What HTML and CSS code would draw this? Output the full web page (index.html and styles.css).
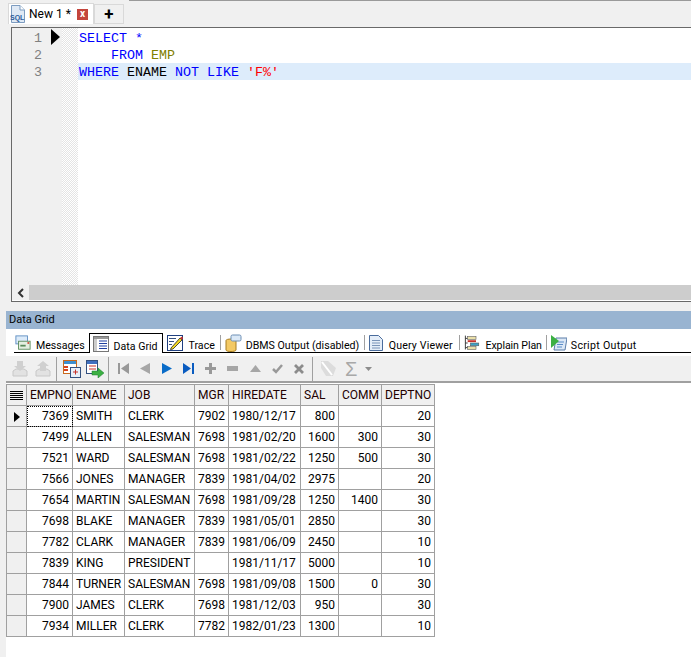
FILE: index.html
```html
<!DOCTYPE html>
<html lang="en">
<head>
<meta charset="utf-8">
<title>New 1</title>
<link rel="stylesheet" href="styles.css">
</head>
<body>
<div class="app">
  <div class="doc-tabs">
    <div class="doc-tab">
      <svg class="sql-icon" width="16" height="18" viewBox="0 0 16 18"><path d="M1.500 .5H10L14.500 5V17.500H1.500Z" fill="#dfe9f5" stroke="#7d9cc0"/><path d="M10 .5V5H14.500" fill="#fff" stroke="#7d9cc0"/><text x="0" y="15" class="sql-text">SQL</text></svg>
      <span class="doc-name">New 1 *</span>
      <span class="doc-close">x</span>
    </div>
    <div class="doc-add">+</div>
    <div class="doc-top-line"></div>
  </div>

  <div class="editor">
    <div class="editor-body">
      <div class="gutter">
        <div class="numbers"><div>1</div><div>2</div><div>3</div></div>
        <div class="marker-col"><svg width="9" height="16" viewBox="0 0 9 16"><path d="M0 0L9 8L0 16Z" fill="#000"/></svg></div>
        <div class="dots"></div>
      </div>
      <div class="code">
        <div class="line"><span class="kw">SELECT</span> <span class="star">*</span></div>
        <div class="line">    <span class="kw">FROM</span> <span class="tbl">EMP</span></div>
        <div class="line current"><span class="kw">WHERE</span> <span class="col">ENAME</span> <span class="kw">NOT</span> <span class="kw">LIKE</span> <span class="str">'F%'</span></div>
      </div>
    </div>
    <div class="hscroll">
      <div class="hscroll-btn"><svg width="8" height="10" viewBox="0 0 8 10"><path d="M6 1L2 5L6 9" fill="none" stroke="#333" stroke-width="2"/></svg></div>
      <div class="hscroll-track"></div>
    </div>
  </div>

  <div class="results">
    <div class="panel-title">Data Grid</div>
    <div class="tabs">
      <div class="tab">
        <svg width="16" height="16" viewBox="0 0 18 18"><rect x="1" y="1" width="13" height="9" fill="#dcebfa" stroke="#5b8cc0"/><rect x="4" y="7" width="13" height="9" fill="#e4efe0" stroke="#5a8a5a"/><rect x="6" y="11" width="6" height="2" fill="#5a8a5a"/><rect x="14" y="8" width="2" height="2" fill="#d04a3a"/></svg>
        <span>Messages</span>
      </div>
      <div class="tab active">
        <svg width="16" height="16" viewBox="0 0 16 16"><rect x=".5" y=".5" width="15" height="15" fill="#fff" stroke="#777"/><rect x="1" y="1" width="14" height="2" fill="#999"/><rect x="1" y="3" width="3" height="12" fill="#ccc"/><path d="M6 5h8M6 7.500h8M6 10h8M6 12.500h8" stroke="#1f3f9f" stroke-width="1.200"/></svg>
        <span>Data Grid</span>
      </div>
      <div class="tab trace">
        <svg width="16" height="16" viewBox="0 0 16 16"><rect x=".5" y=".5" width="15" height="15" fill="#fff" stroke="#1f3f7f"/><path d="M2 3.500h7M2 6.500h5M2 9.500h3" stroke="#34507f"/><path d="M4 13L13 3L15 5L6 14L3.500 14.500Z" fill="#f4d81e" stroke="#222" stroke-width=".8"/><path d="M13 3L15 5L16 3L15 1.500Z" fill="#c8322a"/></svg>
        <span>Trace</span>
      </div>
      <div class="tab-sep"></div>
      <div class="tab t-dbms">
        <svg width="17" height="18" viewBox="0 0 17 18"><path d="M1 6.500C1 4.500 11 4.500 11 6.500V16C11 18 1 18 1 16Z" fill="#f3c964" stroke="#a67c20"/><rect x="6" y="1" width="10" height="6" rx="1.500" fill="#dbe9f7" stroke="#6d8fb5"/></svg>
        <span>DBMS Output (disabled)</span>
      </div>
      <div class="tab-sep"></div>
      <div class="tab t-query">
        <svg width="14" height="16" viewBox="0 0 14 16"><path d="M.5 .5H9.500L13.500 4.500V15.500H.5Z" fill="#e4edf8" stroke="#4a6c9c"/><path d="M3 5.500h8M3 8h8M3 10.500h8M3 13h8" stroke="#7a94b8"/></svg>
        <span>Query Viewer</span>
      </div>
      <div class="tab-sep"></div>
      <div class="tab t-plan">
        <svg width="16" height="16" viewBox="0 0 17 16"><path d="M1.500 0V15M1.500 3H4M1.500 8H4M1.500 13H4" stroke="#333" fill="none"/><rect x="4" y="1" width="9" height="3" fill="#eadfa8" stroke="#555" stroke-width=".6"/><rect x="4" y="5" width="9" height="2" fill="#c8322a"/><rect x="7" y="8" width="9" height="3" fill="#3fa3c8" stroke="#555" stroke-width=".6"/><rect x="4" y="12" width="9" height="3" fill="#eadfa8" stroke="#555" stroke-width=".6"/></svg>
        <span>Explain Plan</span>
      </div>
      <div class="tab-sep"></div>
      <div class="tab t-script">
        <svg width="16" height="16" viewBox="0 0 16 16"><path d="M5 3H16L14 15H3Z" fill="#dce8f6" stroke="#5a7ca8"/><path d="M6 7h7M6 9.500h6M6 12h5" stroke="#5a8cc8"/><path d="M0 0L8 6L0 13Z" fill="#3cb043"/></svg>
        <span>Script Output</span>
      </div>
      <div class="tabs-rest"></div>
    </div>

    <div class="toolbar">
      <div class="tool-group first">
        <svg width="17" height="18" viewBox="0 0 17 18"><path d="M1 11V16H15V11L12 9H4Z" fill="#e2e2e2" stroke="#c8c8c8"/><path d="M5 1H11V6H14L8 11L2 6H5Z" fill="#d0d0d0"/></svg>
        <svg width="17" height="18" viewBox="0 0 17 18"><path d="M1 11V16H15V11L12 9H4Z" fill="#e2e2e2" stroke="#c8c8c8"/><path d="M5 11H11V6H14L8 1L2 6H5Z" fill="#d0d0d0"/></svg>
      </div>
      <div class="tool-group second">
        <svg width="18" height="18" viewBox="0 0 18 18"><rect x=".5" y=".5" width="13" height="13" fill="#fff" stroke="#c86a1e"/><rect x="1" y="1" width="12" height="3" fill="#3f8fd0"/><path d="M1 7h4M1 10h4" stroke="#d8421e" stroke-width="2"/><rect x="7.500" y="7.500" width="10" height="10" fill="#e8f0fa" stroke="#34507f"/><path d="M12.500 9.500v5M10 12h5" stroke="#c8322a"/></svg>
        <svg width="18" height="18" viewBox="0 0 18 18"><rect x=".5" y=".5" width="11" height="13" fill="#fff" stroke="#34507f"/><rect x="1" y="1" width="10" height="3" fill="#3f6fc0"/><path d="M3 6h7M3 9h7" stroke="#c8322a"/><path d="M6 11H12V8L18 13L12 18V15H6Z" fill="#3cb043" stroke="#1f7f2f" stroke-width=".5"/></svg>
      </div>
      <div class="tool-group nav">
        <svg width="11" height="11" viewBox="0 0 11 11"><path d="M0 0H2V11H0ZM11 0V11L3 5.500Z" fill="#999"/></svg>
        <svg width="10" height="11" viewBox="0 0 10 11"><path d="M10 0V11L0 5.500Z" fill="#a6a6a6"/></svg>
        <svg width="10" height="11" viewBox="0 0 10 11"><path d="M0 0V11L10 5.500Z" fill="#0a6cc8"/></svg>
        <svg width="11" height="11" viewBox="0 0 11 11"><path d="M9 0H11V11H9ZM0 0V11L8 5.500Z" fill="#0a5cc0"/></svg>
        <svg width="11" height="11" viewBox="0 0 11 11"><path d="M4 0H7V4H11V7H7V11H4V7H0V4H4Z" fill="#999"/></svg>
        <svg width="11" height="5" viewBox="0 0 11 5"><path d="M0 0H11V5H0Z" fill="#a6a6a6"/></svg>
        <svg width="11" height="7" viewBox="0 0 11 7"><path d="M5.500 0L11 7H0Z" fill="#a6a6a6"/></svg>
        <svg width="11" height="10" viewBox="0 0 11 10"><path d="M1 5L4 8L10 1" fill="none" stroke="#999" stroke-width="2.500"/></svg>
        <svg width="10" height="10" viewBox="0 0 10 10"><path d="M1 1L9 9M9 1L1 9" stroke="#8c8c8c" stroke-width="2.800"/></svg>
      </div>
      <div class="tool-group last">
        <svg width="17" height="17" viewBox="0 0 17 17"><path d="M1 1H8L16 8L13 16H6L1 8Z" fill="#dcdcdc"/><path d="M2 2L12 15" stroke="#fff" stroke-width="2"/></svg>
        <span class="sigma">Σ</span>
        <svg width="7" height="4" viewBox="0 0 7 4"><path d="M0 0H7L3.500 4Z" fill="#8c8c8c"/></svg>
      </div>
    </div>

    <div class="grid-wrap">
      <table class="grid">
        <colgroup><col class="c-ind"><col class="c-empno"><col class="c-ename"><col class="c-job"><col class="c-mgr"><col class="c-date"><col class="c-sal"><col class="c-comm"><col class="c-dept"></colgroup>
        <thead>
          <tr><th class="ind"><svg width="13" height="9" viewBox="0 0 13 9"><path d="M0 .5h13M0 2.500h13M0 4.500h13M0 6.500h13M0 8.500h13" stroke="#000"/></svg></th><th>EMPNO</th><th>ENAME</th><th>JOB</th><th>MGR</th><th>HIREDATE</th><th>SAL</th><th>COMM</th><th>DEPTNO</th></tr>
        </thead>
        <tbody>
          <tr><th class="ind"><svg width="6" height="10" viewBox="0 0 6 10"><path d="M0 0L6 5L0 10Z" fill="#000"/></svg></th><td class="n focus">7369</td><td>SMITH</td><td>CLERK</td><td class="n">7902</td><td>1980/12/17</td><td class="n">800</td><td class="n"></td><td class="n">20</td></tr>
          <tr><th class="ind"></th><td class="n">7499</td><td>ALLEN</td><td>SALESMAN</td><td class="n">7698</td><td>1981/02/20</td><td class="n">1600</td><td class="n">300</td><td class="n">30</td></tr>
          <tr><th class="ind"></th><td class="n">7521</td><td>WARD</td><td>SALESMAN</td><td class="n">7698</td><td>1981/02/22</td><td class="n">1250</td><td class="n">500</td><td class="n">30</td></tr>
          <tr><th class="ind"></th><td class="n">7566</td><td>JONES</td><td>MANAGER</td><td class="n">7839</td><td>1981/04/02</td><td class="n">2975</td><td class="n"></td><td class="n">20</td></tr>
          <tr><th class="ind"></th><td class="n">7654</td><td>MARTIN</td><td>SALESMAN</td><td class="n">7698</td><td>1981/09/28</td><td class="n">1250</td><td class="n">1400</td><td class="n">30</td></tr>
          <tr><th class="ind"></th><td class="n">7698</td><td>BLAKE</td><td>MANAGER</td><td class="n">7839</td><td>1981/05/01</td><td class="n">2850</td><td class="n"></td><td class="n">30</td></tr>
          <tr><th class="ind"></th><td class="n">7782</td><td>CLARK</td><td>MANAGER</td><td class="n">7839</td><td>1981/06/09</td><td class="n">2450</td><td class="n"></td><td class="n">10</td></tr>
          <tr><th class="ind"></th><td class="n">7839</td><td>KING</td><td>PRESIDENT</td><td class="n"></td><td>1981/11/17</td><td class="n">5000</td><td class="n"></td><td class="n">10</td></tr>
          <tr><th class="ind"></th><td class="n">7844</td><td>TURNER</td><td>SALESMAN</td><td class="n">7698</td><td>1981/09/08</td><td class="n">1500</td><td class="n">0</td><td class="n">30</td></tr>
          <tr><th class="ind"></th><td class="n">7900</td><td>JAMES</td><td>CLERK</td><td class="n">7698</td><td>1981/12/03</td><td class="n">950</td><td class="n"></td><td class="n">30</td></tr>
          <tr><th class="ind"></th><td class="n">7934</td><td>MILLER</td><td>CLERK</td><td class="n">7782</td><td>1982/01/23</td><td class="n">1300</td><td class="n"></td><td class="n">10</td></tr>
        </tbody>
      </table>
    </div>
  </div>
</div>
</body>
</html>
```
FILE: styles.css
```css
* { box-sizing: border-box; }
html, body { margin: 0; padding: 0; }
body {
  width: 691px;
  height: 657px;
  overflow: hidden;
  background: #f0f0f0;
  font-family: Roboto, "Liberation Sans", sans-serif;
  font-size: 12px;
  color: #000;
}
.app { display: flex; flex-direction: column; height: 657px; }

/* document tabs */
.doc-tabs {
  position: relative;
  display: flex;
  align-items: flex-end;
  height: 25px;
  padding-left: 8px;
  background: #f0f0f0;
  border-bottom: 1px solid #f0f0f0;
}
.doc-tab {
  display: flex;
  align-items: center;
  width: 86px;
  height: 21px;
  padding-left: 1px;
  background: #fff;
  border: 1px solid #d9d9d9;
  border-bottom: 0;
}
.sql-icon { flex: none; }
.sql-text { font: bold 7px "Liberation Sans", sans-serif; fill: #2c5c9c; }
.doc-name { margin-left: 3px; width: 48px; flex: none; font-size: 12px; white-space: nowrap; }
.doc-close {
  width: 11px;
  height: 11px;
  background: #c4453c;
  color: #fff;
  font-size: 10px;
  font-weight: bold;
  line-height: 9px;
  text-align: center;
}
.doc-add {
  width: 30px;
  height: 20px;
  background: #f0f0f0;
  border: 1px solid #d9d9d9;
  font-size: 17px;
  font-weight: bold;
  line-height: 18px;
  text-align: center;
}
.doc-top-line {
  position: absolute;
  left: 129px;
  top: 0;
  right: 0;
  height: 1px;
  background: #9a9a9a;
}

/* SQL editor */
.editor {
  display: flex;
  flex-direction: column;
  height: 275px;
  margin: 2px 0 0 11px;
  border: 1px solid #696969;
  border-right: 0;
  background: #fff;
}
.editor-body { flex: 1; display: flex; min-height: 0; }
.gutter { display: flex; flex: none; width: 66px; background: #f0f0f0; }
.numbers {
  width: 30px;
  padding-top: 1px;
  color: #808080;
  font: 13.33px/17px "Liberation Mono", monospace;
  text-align: right;
}
.numbers div { height: 17px; line-height: 19px; }
.marker-col { width: 20px; padding: 1px 0 0 9px; }
.dots {
  width: 16px;
  background-color: #fff;
  background-image: conic-gradient(#e4e4e4 25%, #fff 0 50%, #e4e4e4 0 75%, #fff 0);
  background-size: 2px 2px;
}
.code { flex: 1; min-width: 0; padding-top: 1px; font: 13.33px/19px "Liberation Mono", monospace; }
.line { height: 17px; padding-left: 1px; white-space: pre; }
.line.current { background: #ddecfb; }
.kw { color: #0000ff; }
.star { color: #0000ff; }
.tbl { color: #808000; }
.col { color: #000; }
.str { color: #ff0000; }
.hscroll { display: flex; flex: none; height: 15px; margin-bottom: 1px; background: #f0f0f0; }
.hscroll-btn { display: flex; flex: none; align-items: center; justify-content: center; width: 17px; }
.hscroll-track { flex: 1; background: #cdcdcd; }

/* result panel */
.results { flex: 1; display: flex; flex-direction: column; min-height: 0; margin: 9px 0 0 6px; }
.panel-title { flex: none; height: 18px; padding-left: 3px; background: #99b4d1; font-size: 11px; line-height: 18px; }
.tabs { display: flex; flex: none; align-items: flex-end; height: 27px; padding: 0 0 3px 8px; background: #fff; font-size: 10.6px; }
.tab {
  display: flex;
  flex: none;
  align-items: center;
  gap: 5px;
  height: 20px;
  padding: 0 4px 0 1px;
  border-bottom: 1px solid #000;
  white-space: nowrap;
}
.tab span { padding-top: 6px; }
.tab.active { padding: 0 4px 0 3px; border: 1px solid #000; border-bottom: 0; }
.tab.trace { gap: 6px; padding: 0 5px 0 4px; }
.tab.t-dbms { width: 140px; gap: 4px; }
.tab.t-query { width: 91px; gap: 6px; letter-spacing: .15px; }
.tab.t-plan { width: 83px; gap: 6px; letter-spacing: -.1px; }
.tab.t-script { gap: 4px; letter-spacing: .3px; }
.tab-sep {
  flex: none;
  width: 4px;
  height: 20px;
  border-bottom: 1px solid #000;
  background: linear-gradient(#a0a0a0, #a0a0a0) 0 2px / 1px 15px no-repeat;
}
.tabs-rest { flex: 1; height: 20px; border-bottom: 1px solid #000; }

.toolbar { display: flex; flex: none; align-items: center; height: 25px; padding-left: 6px; }
.tool-group { display: flex; align-items: center; height: 24px; border-right: 1px solid #a0a0a0; }
.tool-group.first { gap: 6px; padding-right: 4px; }
.tool-group.second { gap: 5px; padding: 0 4px 0 6px; }
.tool-group.nav { justify-content: space-between; width: 204px; padding: 0 8px 0 9px; }
.tool-group.last { gap: 8px; padding-left: 7px; border-right: 0; }
.sigma { color: #a8a8a8; font-family: "Liberation Sans", sans-serif; font-size: 20px; line-height: 20px; }

/* data grid */
.grid-wrap { flex: 1; min-height: 0; border-top: 2px solid #a0a0a0; background: #fff; }
.grid { border-collapse: collapse; table-layout: fixed; width: 428px; margin: 1px 0 0 0; }
.c-ind { width: 20px; }
.c-empno { width: 46px; }
.c-ename { width: 52px; }
.c-job { width: 70px; }
.c-mgr { width: 34px; }
.c-date { width: 72px; }
.c-sal { width: 38px; }
.c-comm { width: 43px; }
.c-dept { width: 53px; }
.grid th, .grid td {
  height: 21px;
  padding: 0 3px;
  border: 1px solid #a0a0a0;
  overflow: hidden;
  white-space: nowrap;
  font-weight: normal;
  text-align: left;
  line-height: 18px;
}
.grid thead th { background: #f0f0f0; color: #200; }
.grid th.ind { background: #f0f0f0; padding: 0; text-align: center; }
.grid svg { display: inline-block; vertical-align: middle; }
.grid td.n { text-align: right; }
.grid td.focus { outline: 1px dotted #000; outline-offset: -1px; }
```
